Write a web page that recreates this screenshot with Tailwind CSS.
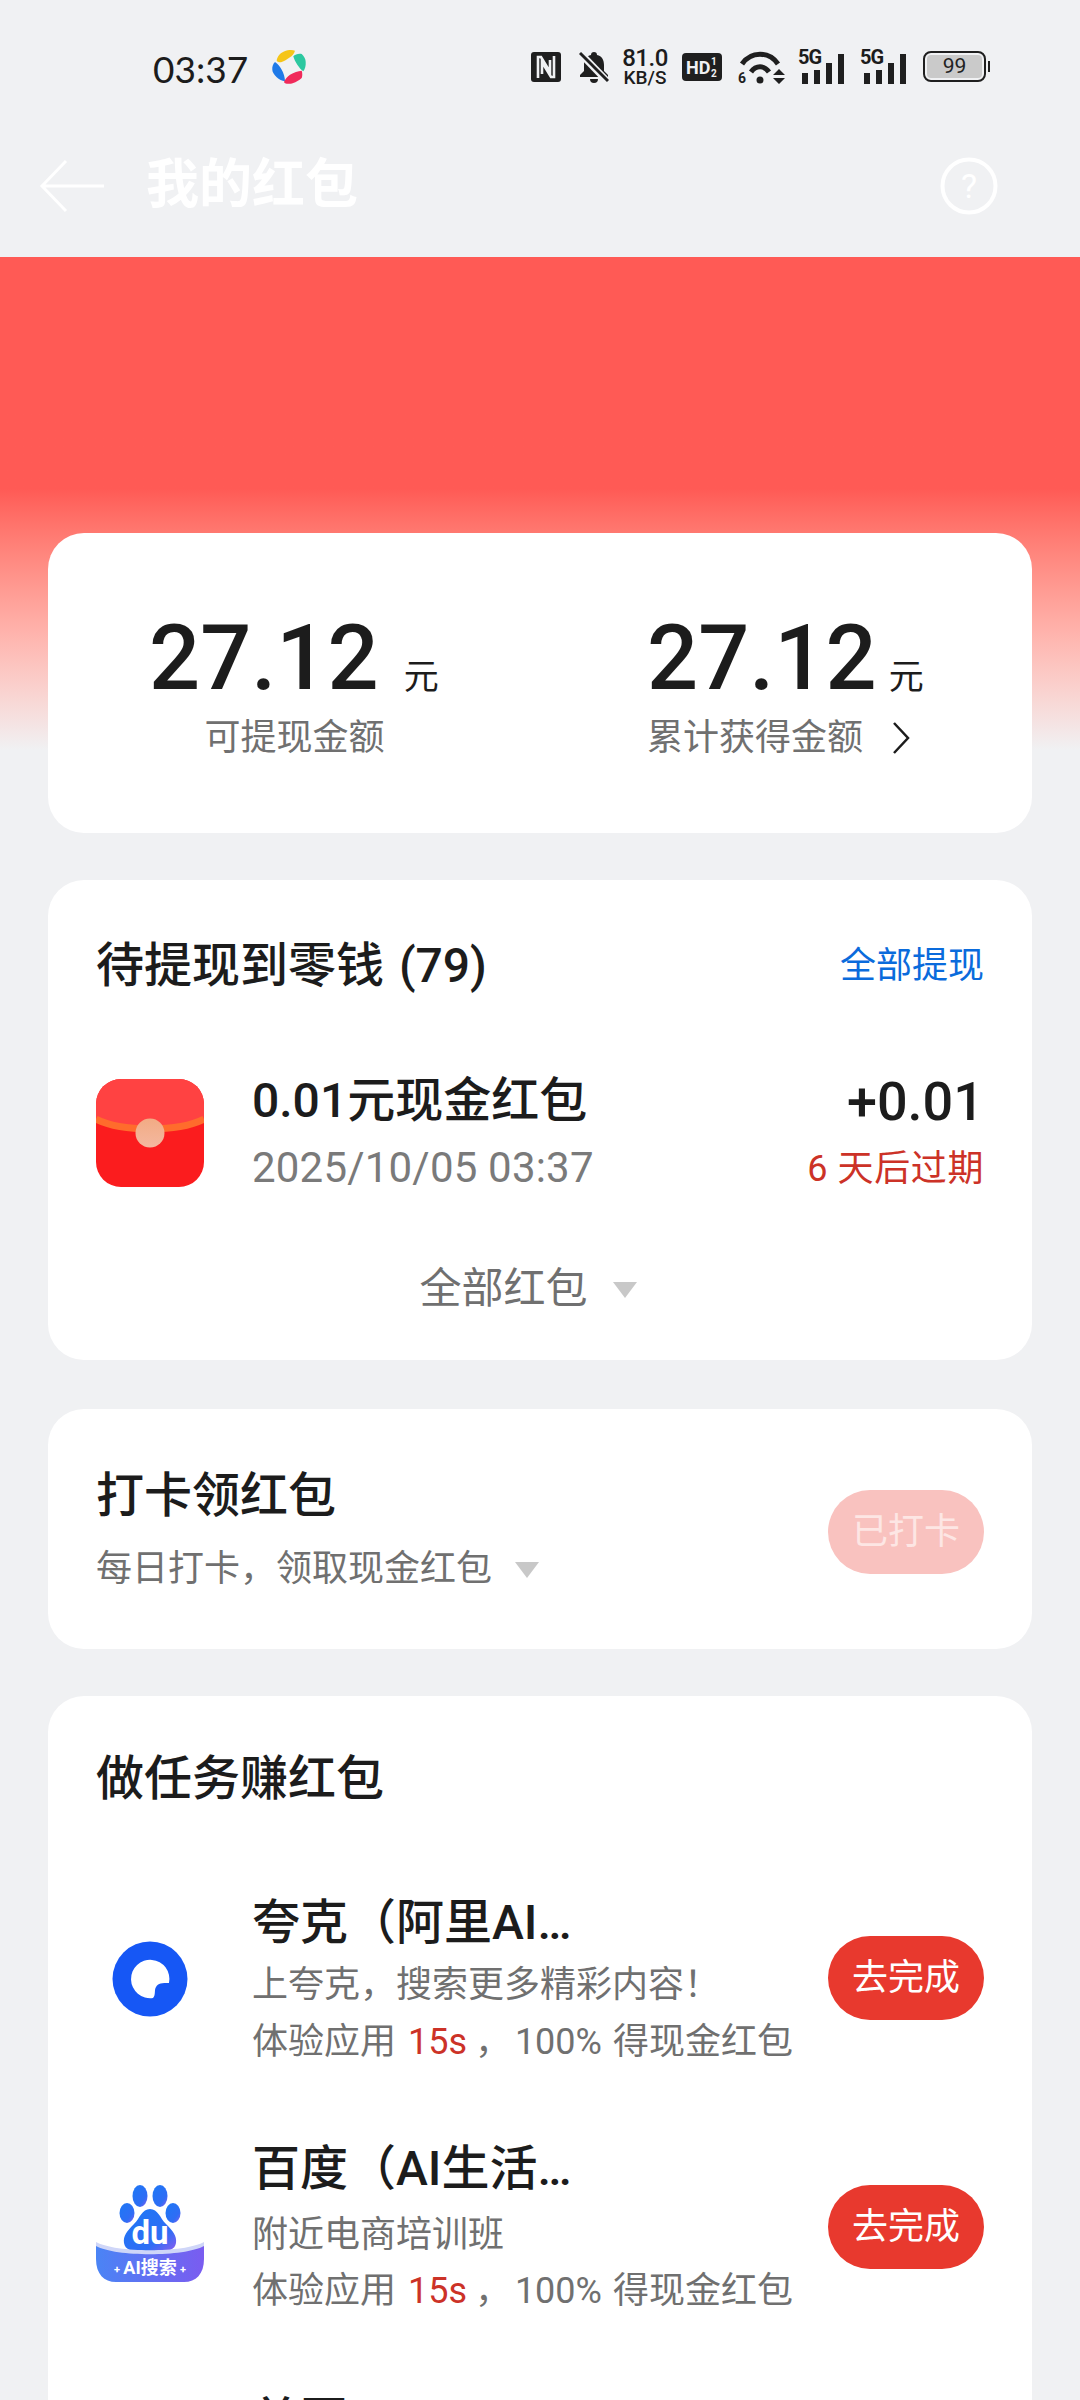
<!doctype html>
<html lang="zh">
<head>
<meta charset="utf-8">
<script src="https://cdn.jsdelivr.net/npm/@tailwindcss/browser@4"></script>
</head>
<body>
<div class="relative w-[1080px] h-[2400px] overflow-hidden bg-[#f0f1f3] font-['Roboto','Noto_Sans_CJK_SC',sans-serif] text-[#1c1c1c]">
  <div class="absolute left-0 top-[257px] w-full h-[493px] bg-linear-to-b from-[#ff5a55] from-[47%] to-[#f0f1f3]"></div>

  <div class="relative flex items-center h-[90px] pt-[46px] text-[#1c1c1c]">
    <span class="ml-[153px] w-[94px] text-[37px] leading-none font-['Lato','Roboto',sans-serif]">03:37</span>
    <svg class="ml-[25px] w-[35px] h-[36px] overflow-visible" viewBox="0 0 35 36">
      <path d="M4.7 10.7C5 7 8 3 12 1.5C16 0 20 -0.3 23 0.7C22 4 20 6 18 7.3C15 9.5 12 11.5 9.7 12C7.5 12.5 5.5 12 4.7 10.7Z" fill="#f5c518"/>
      <path d="M21.3 6.3C23 4.5 27 3 29.7 4C32 6 33.7 9 33.7 12C34 16 33 19 31.3 21.3C29 20 27 17 25.3 14.7C23.5 12 22 9 21.3 6.3Z" fill="#2cc8a0"/>
      <path d="M3 12C5 13.5 8 16 9.7 19.7C11.5 23 13 27 13 31.3C10 31 7 29.5 4.7 27.3C2 24.5 0.3 22 0.3 19.7C0 16.5 1 14 3 12Z" fill="#1f7ae8"/>
      <path d="M12 32C13 29 15.5 26.5 18 24.7C22 22.5 26 21 29.7 20.7C30.5 23 30.5 26 29.7 28C27 30.5 24 32 21.3 33C18.5 34 16 34 14.7 33.7C13.5 33.5 12.5 33 12 32Z" fill="#f02a5a"/>
    </svg>
    <div class="ml-[224px] flex items-center h-[40px] -mt-[3px]">
      <svg class="w-[30px] h-[30px]" viewBox="0 0 30 30"><rect width="30" height="30" rx="3" fill="#1f1f1f"/><path d="M7 26V5h3l9 15V8M23 4v21h-3L11 10v12" fill="none" stroke="#f0f1f3" stroke-width="2.6"/></svg>
      <svg class="ml-[18px] w-[30px] h-[32px]" viewBox="0 0 30 32"><path d="M15 1a3 3 0 0 1 3 3c5 1 7 5 7 10v6l4 4v2H1v-2l4-4v-6c0-5 2-9 7-10a3 3 0 0 1 3-3zM11 28h8a4 4 0 0 1-8 0z" fill="#1f1f1f"/><path d="M2 3l26 27" stroke="#f0f1f3" stroke-width="7"/><path d="M1 2l28 28" stroke="#1f1f1f" stroke-width="3"/></svg>
      <div class="ml-[13px] w-[46px] flex flex-col items-center font-medium">
        <span class="text-[24px] leading-[21px] tracking-[-0.5px]">81.0</span>
        <span class="text-[19px] leading-[17px]">KB/S</span>
      </div>
      <svg class="ml-[14px] w-[40px] h-[28px]" viewBox="0 0 40 28"><rect width="40" height="28" rx="4" fill="#1f1f1f"/><text x="4" y="21" font-size="18" font-weight="700" fill="#f0f1f3" font-family="Roboto">HD</text><text x="29" y="12" font-size="10" font-weight="700" fill="#f0f1f3" font-family="Roboto">1</text><text x="29" y="24" font-size="10" font-weight="700" fill="#f0f1f3" font-family="Roboto">2</text></svg>
      <svg class="ml-[16px] w-[47px] h-[34px]" viewBox="0 0 47 34">
        <path d="M4 14C13 1 31 1 40 14" fill="none" stroke="#1f1f1f" stroke-width="5"/>
        <path d="M13 22C18 15 26 15 31 22" fill="none" stroke="#1f1f1f" stroke-width="5"/>
        <circle cx="22" cy="30" r="3.5" fill="#1f1f1f"/>
        <text x="0" y="33" font-size="14" font-weight="700" fill="#1f1f1f" font-family="Roboto">6</text>
        <path d="M35 25l6-6 6 6zM35 28h12l-6 6z" fill="#1f1f1f"/>
      </svg>
      <div class="ml-[13px] relative w-[46px] h-[34px]">
        <span class="absolute left-0 top-[-3px] text-[20px] leading-[20px] font-bold tracking-[-1px]">5G</span>
        <div class="absolute left-[4px] bottom-0 flex items-end gap-[6px]">
          <i class="block w-[6px] h-[11px] bg-[#1f1f1f]"></i><i class="block w-[6px] h-[14px] bg-[#1f1f1f]"></i><i class="block w-[6px] h-[21px] bg-[#1f1f1f]"></i><i class="block w-[6px] h-[30px] bg-[#1f1f1f]"></i>
        </div>
      </div>
      <div class="ml-[16px] relative w-[46px] h-[34px]">
        <span class="absolute left-0 top-[-3px] text-[20px] leading-[20px] font-bold tracking-[-1px]">5G</span>
        <div class="absolute left-[4px] bottom-0 flex items-end gap-[6px]">
          <i class="block w-[6px] h-[11px] bg-[#1f1f1f]"></i><i class="block w-[6px] h-[14px] bg-[#1f1f1f]"></i><i class="block w-[6px] h-[21px] bg-[#1f1f1f]"></i><i class="block w-[6px] h-[30px] bg-[#1f1f1f]"></i>
        </div>
      </div>
      <div class="ml-[17px] flex items-center">
        <div class="w-[63px] h-[31px] rounded-[8px] border-[2px] border-[#1f1f1f] p-[2px]">
          <div class="w-full h-full rounded-[4px] bg-[#cacaca] text-center text-[21px] leading-[23px] text-[#222]">99</div>
        </div>
        <i class="block ml-[2px] w-[2px] h-[11px] bg-[#1f1f1f]"></i>
      </div>
    </div>
  </div>

  <div class="relative flex items-center h-[167px] pt-[24px]">
    <svg class="ml-[38px] w-[68px] h-[56px]" viewBox="0 0 68 56"><path d="M66 28H5M28 3L4 28L28 53" fill="none" stroke="#fff" stroke-width="3"/></svg>
    <span class="ml-[40px] text-[53px] leading-none font-bold text-white">我的红包</span>
    <svg class="ml-[582px] w-[58px] h-[58px]" viewBox="0 0 58 58"><circle cx="29" cy="29" r="26.5" fill="none" stroke="#fff" stroke-width="4"/><text x="29" y="41" text-anchor="middle" font-size="34" fill="#fff" font-family="Roboto">?</text></svg>
  </div>

  <main class="relative pt-[276px] px-[48px]">
    <section class="flex h-[300px] bg-white rounded-[36px]">
      <div class="ml-[101px] w-[291px] pt-[78px]">
        <div class="flex items-baseline h-[96px]">
          <span class="text-[90px] leading-[96px] font-medium">27.12</span>
          <span class="ml-[25px] text-[35px] leading-none">元</span>
        </div>
        <p class="mt-[6px] text-center text-[36px] leading-[50px] text-[#707070]">可提现金额</p>
      </div>
      <div class="ml-[207px] w-[280px] pt-[78px]">
        <div class="flex items-baseline h-[96px]">
          <span class="text-[90px] leading-[96px] font-medium">27.12</span>
          <span class="ml-[12px] text-[35px] leading-none">元</span>
        </div>
        <div class="mt-[6px] flex items-center h-[50px]">
          <span class="text-[36px] leading-[50px] text-[#707070]">累计获得金额</span>
          <svg class="ml-[28px] w-[20px] h-[34px]" viewBox="0 0 20 34"><path d="M3 2L17 17L3 32" fill="none" stroke="#1c1c1c" stroke-width="2.5"/></svg>
        </div>
      </div>
    </section>

    <section class="mt-[47px] h-[480px] bg-white rounded-[36px] px-[48px]">
      <div class="flex items-center justify-between pt-[59px] h-[113px]">
        <h2 class="text-[48px] leading-[58px] font-medium">待提现到零钱 <span class="ml-[3px]">(79)</span></h2>
        <span class="text-[36px] leading-[58px] text-[#0a6bdc]">全部提现</span>
      </div>
      <div class="mt-[86px] flex items-center h-[108px]">
        <svg class="w-[108px] h-[108px] shrink-0" viewBox="0 0 108 108">
          <defs>
            <linearGradient id="s" x1="0" y1="1" x2="0" y2="0"><stop offset="0" stop-color="#f4b8a0"/><stop offset="1" stop-color="#f2ab84"/></linearGradient>
          </defs>
          <clipPath id="r"><rect width="108" height="108" rx="25"/></clipPath>
          <g clip-path="url(#r)">
            <rect width="108" height="108" fill="#fb1c1e"/>
            <path d="M0 40C25 53 83 53 108 40V0H0z" fill="#ff4242"/>
            <path d="M0 40C25 53 83 53 108 40" fill="none" stroke="#ff6c2c" stroke-width="7"/>
          </g>
          <circle cx="54" cy="54" r="14.5" fill="url(#s)"/>
        </svg>
        <div class="ml-[48px] flex-1">
          <div class="text-[48px] leading-[62px] font-medium">0.01元现金红包</div>
          <div class="mt-[8px] text-[42px] leading-[56px] tracking-[0.2px] text-[#7a7a7a]">2025/10/05 03:37</div>
        </div>
        <div class="text-right mt-[2px]">
          <div class="text-[54px] leading-[62px] font-medium">+0.01</div>
          <div class="mt-[8px] text-[36px] leading-[56px] tracking-[0.6px] text-[#cc3227]">6 天后过期</div>
        </div>
      </div>
      <div class="mt-[74px] flex items-center justify-center h-[56px] pr-[24px]">
        <span class="text-[42px] leading-[56px] text-[#707070]">全部红包</span>
        <i class="block ml-[25px] mt-[2px] w-0 h-0 border-x-[12px] border-x-transparent border-t-[16px] border-t-[#c8c8c8]"></i>
      </div>
    </section>

    <section class="mt-[49px] flex items-center justify-between h-[240px] bg-white rounded-[36px] px-[48px]">
      <div>
        <div class="text-[48px] leading-[64px] font-medium">打卡领红包</div>
        <div class="mt-[16px] flex items-center">
          <span class="text-[36px] leading-[50px] text-[#707070]">每日打卡，领取现金红包</span>
          <i class="block ml-[23px] mt-[2px] w-0 h-0 border-x-[12px] border-x-transparent border-t-[16px] border-t-[#c8c8c8]"></i>
        </div>
      </div>
      <button class="mt-[6px] w-[156px] h-[84px] rounded-full bg-[#f9c2bf] text-[36px] text-[#fde6e4]">已打卡</button>
    </section>

    <section class="mt-[47px] h-[800px] bg-white rounded-[36px] px-[48px]">
      <h2 class="pt-[51px] text-[48px] leading-[64px] font-medium">做任务赚红包</h2>

      <div class="mt-[83px] flex items-center h-[170px]">
        <svg class="w-[108px] h-[108px] shrink-0" viewBox="0 0 108 108">
          <circle cx="54" cy="54" r="37.5" fill="#1657f5"/>
          <path d="M57 73A19.2 19.2 0 1 1 73 58C66 58 62 58 60 62C58 65 60 70 57 73Z" fill="#fff"/>
        </svg>
        <div class="ml-[48px] flex-1 mt-[4px]">
          <div class="text-[48px] leading-[64px] font-medium">夸克（阿里AI…</div>
          <div class="mt-[3px] text-[36px] leading-[54px] text-[#707070]">上夸克，搜索更多精彩内容！</div>
          <div class="mt-[1px] text-[36px] leading-[58px] text-[#707070]">体验应用 <span class="ml-[3px] text-[#cc3227]">15s</span> <span class="-ml-[1px]">，</span> <span class="-ml-[5px]">100%</span> <span class="ml-[2px]">得现金红包</span></div>
        </div>
        <button class="-mt-[3px] w-[156px] h-[84px] shrink-0 rounded-full bg-[#e8392e] text-[36px] text-white">去完成</button>
      </div>

      <div class="mt-[79px] flex items-center h-[170px]">
        <svg class="w-[108px] h-[108px] shrink-0" viewBox="0 0 108 108">
          <defs>
            <linearGradient id="p" x1="0" y1="0" x2="1" y2="1"><stop offset="0" stop-color="#1d78f5"/><stop offset=".7" stop-color="#2f6df5"/><stop offset="1" stop-color="#8a5cf0"/></linearGradient>
            <linearGradient id="b" x1="0" y1="0" x2="1" y2="0"><stop offset="0" stop-color="#4a84f5"/><stop offset="1" stop-color="#7a5cf0"/></linearGradient>
          </defs>
          <ellipse cx="44" cy="22" rx="7.5" ry="11" fill="url(#p)"/><ellipse cx="64" cy="22" rx="7.5" ry="11" fill="url(#p)"/>
          <ellipse cx="31" cy="39" rx="7.5" ry="10" fill="url(#p)"/><ellipse cx="77" cy="39" rx="7.5" ry="10" fill="url(#p)"/>
          <path d="M54 35C62 35 64 44 70 50C77 57 81 62 80 69C79 76 72 77 66 77H42C36 77 29 76 28 69C27 62 31 57 38 50C44 44 46 35 54 35Z" fill="url(#p)"/>
          <text x="54" y="70" text-anchor="middle" font-size="33" font-weight="700" fill="#fff" font-family="Roboto">du</text>
          <path d="M0 71C20 82 88 82 108 71V85C108 100 100 108 88 108H20C8 108 0 100 0 85Z" fill="url(#b)"/>
          <path d="M0 68C20 79 88 79 108 68V72C88 83 20 83 0 72Z" fill="#cfd6f8"/>
          <text x="54" y="100" text-anchor="middle" font-size="18" font-weight="700" fill="#fff" font-family="Roboto,'Noto Sans CJK SC'">AI搜索</text>
          <text x="21" y="99" text-anchor="middle" font-size="11" font-weight="700" fill="#fff" font-family="Roboto">+</text><text x="87" y="99" text-anchor="middle" font-size="11" font-weight="700" fill="#fff" font-family="Roboto">+</text>
        </svg>
        <div class="ml-[48px] flex-1">
          <div class="text-[48px] leading-[64px] font-medium">百度（AI生活…</div>
          <div class="mt-[7px] text-[36px] leading-[54px] text-[#707070]">附近电商培训班</div>
          <div class="text-[36px] leading-[58px] text-[#707070]">体验应用 <span class="ml-[3px] text-[#cc3227]">15s</span> <span class="-ml-[1px]">，</span> <span class="-ml-[5px]">100%</span> <span class="ml-[2px]">得现金红包</span></div>
        </div>
        <button class="-mt-[3px] w-[156px] h-[84px] shrink-0 rounded-full bg-[#e8392e] text-[36px] text-white">去完成</button>
      </div>

      <div class="mt-[76px] ml-[156px] text-[48px] leading-[64px] font-medium">美团</div>
    </section>
  </main>
</div>
</body>
</html>
